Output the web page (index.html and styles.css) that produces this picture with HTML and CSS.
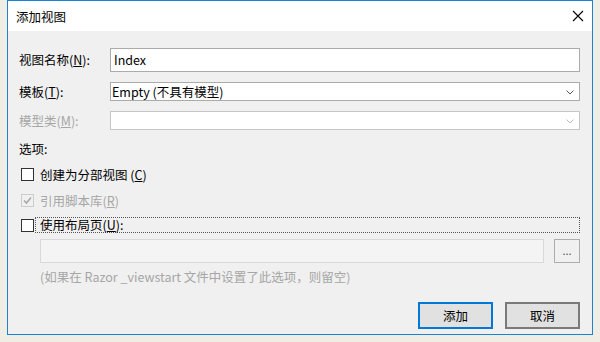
FILE: index.html
```html
<!DOCTYPE html>
<html lang="zh-CN">
<head>
<meta charset="UTF-8">
<title>添加视图</title>
<link rel="stylesheet" href="styles.css">
</head>
<body>
    <div class="window">
        <div class="titlebar">
            <span class="title">添加视图</span>
            <svg class="close" width="12" height="12" viewBox="0 0 12 12">
                <path d="M1 1 L11 11 M11 1 L1 11" stroke="#000" stroke-width="1.1" fill="none"/>
            </svg>
        </div>
        <div class="content">
            <div class="row first">
                <label class="lbl">视图名称(<u>N</u>):</label>
                <div class="field text">Index</div>
            </div>
            <div class="row">
                <label class="lbl">模板(<u>T</u>):</label>
                <div class="field combo">
                    <span>Empty (不具有模型)</span>
                    <svg class="chev" width="8" height="5" viewBox="0 0 8 5"><path d="M0.5 0.5 L4 4 L7.5 0.5" stroke="#555" fill="none"/></svg>
                </div>
            </div>
            <div class="row">
                <label class="lbl disabled">模型类(<u>M</u>):</label>
                <div class="field combo off">
                    <span></span>
                    <svg class="chev" width="8" height="5" viewBox="0 0 8 5"><path d="M0.5 0.5 L4 4 L7.5 0.5" stroke="#bbb" fill="none"/></svg>
                </div>
            </div>
            <div class="section">选项:</div>
            <div class="check c1">
                <span class="box"></span>
                <span>创建为分部视图 (<u>C</u>)</span>
            </div>
            <div class="check c2 disabled">
                <span class="box checked">
                    <svg width="11" height="11" viewBox="0 0 11 11"><path d="M2 5.5 L4.5 8 L9 2.5" stroke="#a8a8a8" stroke-width="1.6" fill="none"/></svg>
                </span>
                <span>引用脚本库(<u>R</u>)</span>
            </div>
            <div class="check c3">
                <span class="box"></span>
                <span class="focus">使用布局页(<u>U</u>):</span>
            </div>
            <div class="layout">
                <div class="field layoutpath"></div>
                <div class="browse">...</div>
            </div>
            <div class="note">(如果在 Razor _viewstart 文件中设置了此选项，则留空)</div>
            <div class="buttons">
                <div class="btn default">添加</div>
                <div class="btn">取消</div>
            </div>
        </div>
    </div>
</body>
</html>
```

FILE: styles.css
```css
body {
    margin: 0;
    background-color: #f0ede4;
    font-family: "Noto Sans CJK SC", "Noto Sans", sans-serif;
    font-size: 12px;
    color: #000;
}

.window {
    box-sizing: border-box;
    margin-left: 7px;
    width: 586px;
    height: 335px;
    border: 1px solid #1883d7;
    background: #f0f0f0;
}

.titlebar {
    height: 30px;
    background: white;
    display: flex;
    align-items: center;
    justify-content: space-between;
    padding: 0 8px 0 8px;
}

.title {
    font-size: 12.5px;
}

.content {
    padding: 0 12px 0 11px;
}

.row {
    display: flex;
    align-items: center;
    margin-top: 10px;
}

.row.first {
    margin-top: 17px;
}

.lbl {
    width: 91px;
    line-height: 16px;
    font-size: 12.5px;
}

.disabled {
    color: #a6a6a6;
}

.field {
    box-sizing: border-box;
    flex: 1;
    background: white;
    border: 1px solid #ababab;
}

.text {
    height: 24px;
    line-height: 22px;
    padding-left: 3px;
    font-size: 12.5px;
}

.combo {
    height: 19px;
    display: flex;
    align-items: center;
    justify-content: space-between;
    padding: 0 5px 0 1px;
    line-height: 17px;
    font-size: 12.5px;
}

.combo.off {
    border-color: #c6c6c6;
}

.chev {
    margin-top: 1px;
}

.section {
    margin-top: 11px;
    line-height: 16px;
    font-size: 12.5px;
}

.check {
    display: flex;
    align-items: center;
    height: 16px;
    padding-left: 2px;
    font-size: 12.5px;
}

.c1 { margin-top: 9px; }
.c2 { margin-top: 10px; }
.c3 { margin-top: 9px; }

.box {
    box-sizing: border-box;
    width: 13px;
    height: 13px;
    border: 1px solid #333;
    background: white;
    margin-right: 6px;
    display: flex;
    align-items: center;
    justify-content: center;
}

.box.checked {
    border-color: #cccccc;
    background: #f0f0f0;
}

.focus {
    flex: 1;
    box-sizing: border-box;
    height: 16px;
    line-height: 14px;
    border: 1px dotted #555;
    margin-left: -5px;
    padding-left: 4px;
}

.layout {
    display: flex;
    margin-top: 6px;
    padding-left: 21px;
    gap: 10px;
}

.layoutpath {
    height: 24px;
    background: #f4f4f4;
    border-color: #d9d9d9;
}

.browse {
    box-sizing: border-box;
    width: 26px;
    height: 24px;
    border: 1px solid #adadad;
    background: #f0f0f0;
    text-align: center;
    line-height: 20px;
    color: #555;
    font-size: 11px;
}

.note {
    margin-top: 6px;
    padding-left: 21px;
    line-height: 16px;
    color: #a6a6a6;
    font-size: 12.5px;
}

.buttons {
    display: flex;
    justify-content: flex-end;
    gap: 12px;
    margin-top: 17px;
}

.btn {
    box-sizing: border-box;
    width: 75px;
    height: 27px;
    line-height: 23px;
    text-align: center;
    background: #e1e1e1;
    border: 2px solid #7a7a7a;
    font-size: 12.5px;
}

.btn.default {
    border-color: #0078d7;
}
```
